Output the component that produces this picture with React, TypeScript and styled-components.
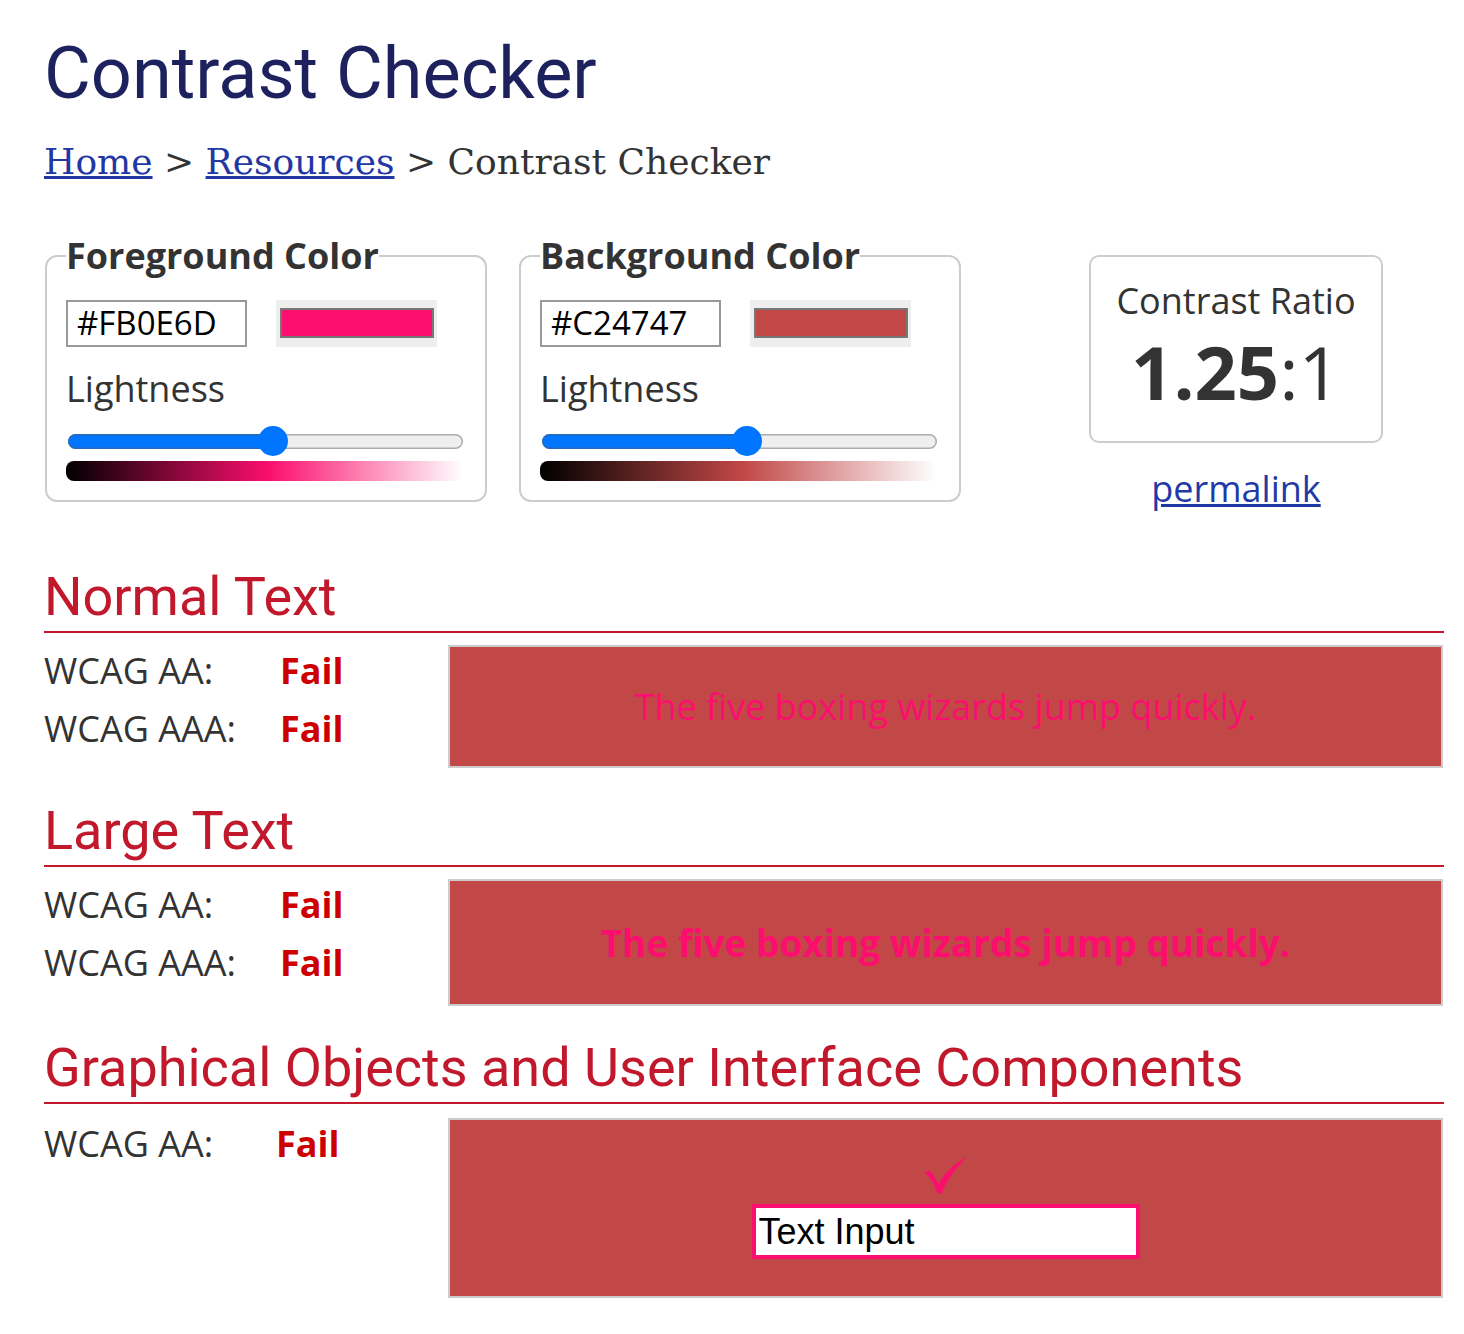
import React from "react";
import styled, { createGlobalStyle } from "styled-components";

const GlobalStyle = createGlobalStyle`
  html, body { margin: 0; padding: 0; background: #fff; }
  body {
    font-family: "Open Sans", "Liberation Sans", sans-serif;
    color: #333;
  }
  *, *::before, *::after { box-sizing: border-box; }
`;

const Page = styled.main`
  width: 1464px;
  padding: 0 20px 37px 44px;
`;

const Title = styled.h1`
  margin: 32px 0 0;
  font-family: Roboto, "Liberation Sans", sans-serif;
  font-weight: 400;
  font-size: 72px;
  line-height: 84px;
  color: #1d225f;
`;

const Breadcrumb = styled.nav`
  margin-top: 25px;
  font-family: "DejaVu Serif", "Liberation Serif", serif;
  font-size: 36px;
  line-height: 42px;
  color: #333;
  white-space: pre;
`;

const CrumbLink = styled.a`
  color: #2237a3;
  text-decoration: underline;
`;

const ControlsRow = styled.div`
  margin-top: 55px;
  padding-left: 1px;
  display: flex;
  align-items: flex-start;
`;

const ColorFieldset = styled.fieldset<{ $gapLeft?: number }>`
  width: 442px;
  margin: 0 0 0 ${(p) => p.$gapLeft ?? 0}px;
  padding: 26px 22px 19px 19px;
  border: 2px solid #ccc;
  border-radius: 12px;
  min-width: 0;
`;

const Legend = styled.legend`
  padding: 0;
  font-weight: 700;
  font-size: 36px;
  line-height: 36px;
  color: #333;
`;

const InputRow = styled.div`
  display: flex;
  gap: 29px;
  height: 47px;
`;

const HexInput = styled.input`
  width: 181px;
  height: 47px;
  margin: 0;
  border: 2px solid #999;
  border-radius: 0;
  padding: 0 0 3px 9px;
  font-family: "Open Sans", sans-serif;
  font-size: 33px;
  color: #000;
  background: #fff;
  outline: none;
`;

const Swatch = styled.div`
  width: 161px;
  padding: 8px 3px 9px 4px;
  background: #eee;
  display: flex;
`;

const SwatchColor = styled.div<{ $color: string }>`
  flex: 1;
  border: 2px solid #777;
  background: ${(p) => p.$color};
`;

const SliderLabel = styled.label`
  display: block;
  margin-top: 17px;
  font-size: 36px;
  line-height: 49px;
  color: #333;
`;

const Range = styled.input<{ $fill: number }>`
  -webkit-appearance: none;
  appearance: none;
  display: block;
  width: 395px;
  height: 30px;
  margin: 13px 0 0 2px;
  padding: 0;
  background: transparent;

  &::-webkit-slider-runnable-track {
    height: 15px;
    border-radius: 8px;
    background: linear-gradient(
      to right,
      #0075ff 0%,
      #0075ff ${(p) => p.$fill}%,
      #efefef ${(p) => p.$fill}%,
      #efefef 100%
    );
    box-shadow: inset 0 0 0 1.5px rgba(90, 90, 90, 0.45);
  }

  &::-webkit-slider-thumb {
    -webkit-appearance: none;
    appearance: none;
    width: 30px;
    height: 30px;
    margin-top: -7.5px;
    border: none;
    border-radius: 50%;
    background: #0075ff;
  }
`;

const Scale = styled.div<{ $color: string }>`
  margin-top: 5px;
  width: 397px;
  height: 20px;
  border-radius: 8px;
  background: linear-gradient(to right, #000 0%, ${(p) => p.$color} 51%, #fff 100%);
`;

const RatioColumn = styled.div`
  margin: 17px 0 0 128px;
  width: 294px;
  display: flex;
  flex-direction: column;
  align-items: center;
`;

const RatioBox = styled.div`
  width: 294px;
  height: 188px;
  border: 2px solid #ccc;
  border-radius: 10px;
  padding-top: 19px;
  text-align: center;
`;

const RatioLabel = styled.div`
  font-size: 36px;
  line-height: 49px;
  color: #333;
`;

const RatioValue = styled.div`
  margin-top: 10px;
  font-size: 74px;
  line-height: 74px;
  color: #333;
`;

const RatioStrong = styled.strong`
  font-weight: 700;
`;

const Permalink = styled.a`
  margin-top: 21px;
  font-size: 36px;
  line-height: 49px;
  color: #1f3aa6;
  text-decoration: underline;
`;

const Section = styled.section<{ $top: number }>`
  margin-top: ${(p) => p.$top}px;
`;

const SectionHeading = styled.h2`
  margin: 0;
  padding-bottom: 3px;
  border-bottom: 2px solid #c1182b;
  font-family: Roboto, "Liberation Sans", sans-serif;
  font-weight: 400;
  font-size: 54px;
  line-height: 63px;
  color: #c1182b;
`;

const SectionBody = styled.div<{ $top: number }>`
  margin-top: ${(p) => p.$top}px;
  display: grid;
  grid-template-columns: 404px 995px;
  align-items: start;
`;

const Results = styled.div<{ $labelWidth: number }>`
  display: grid;
  grid-template-columns: ${(p) => p.$labelWidth}px auto;
  font-size: 36px;
  line-height: 58px;
`;

const Level = styled.span`
  color: #333;
`;

const Verdict = styled.span`
  font-weight: 700;
  color: #cc0000;
`;

const Sample = styled.div<{ $height: number; $bold?: boolean; $bg: string; $fg: string }>`
  margin-top: 3px;
  height: ${(p) => p.$height}px;
  border: 2px solid #ccc;
  background: ${(p) => p.$bg};
  color: ${(p) => p.$fg};
  display: flex;
  flex-direction: column;
  align-items: center;
  justify-content: center;
  gap: 10px;
  font-size: ${(p) => (p.$bold ? 37 : 36)}px;
  font-weight: ${(p) => (p.$bold ? 700 : 400)};
`;

const CheckMark = styled.svg`
  display: block;
  width: 44px;
  height: 37px;
`;

const DemoInput = styled.input<{ $accent: string }>`
  display: block;
  width: 388px;
  height: 55px;
  margin: 0;
  padding: 0 3px;
  border: 4px solid ${(p) => p.$accent};
  border-radius: 0;
  background: #fff;
  font-family: "Liberation Sans", Arial, sans-serif;
  font-size: 36px;
  color: #000;
  outline: none;
`;

const FG = "#FB0E6D";
const BG = "#C24747";
const LIGHTNESS = 52;

// fill of the track ends at the thumb centre
const fillPct = (v: number) => ((15 + (v / 100) * 365) / 395) * 100;

type ColorControlProps = { legend: string; color: string; gapLeft?: number };

function ColorControl({ legend, color, gapLeft }: ColorControlProps) {
  return (
    <ColorFieldset $gapLeft={gapLeft}>
      <Legend>{legend}</Legend>
      <InputRow>
        <HexInput defaultValue={color} aria-label={`${legend} hex`} />
        <Swatch>
          <SwatchColor $color={color} />
        </Swatch>
      </InputRow>
      <SliderLabel>Lightness</SliderLabel>
      <Range
        type="range"
        min={0}
        max={100}
        defaultValue={LIGHTNESS}
        $fill={fillPct(LIGHTNESS)}
        aria-label={`${legend} lightness`}
      />
      <Scale $color={color} />
    </ColorFieldset>
  );
}

type Row = { level: string; result: string };

function ResultList({ rows, labelWidth }: { rows: Row[]; labelWidth: number }) {
  return (
    <Results $labelWidth={labelWidth}>
      {rows.map((r) => (
        <React.Fragment key={r.level}>
          <Level>{r.level}</Level>
          <Verdict>{r.result}</Verdict>
        </React.Fragment>
      ))}
    </Results>
  );
}

const both: Row[] = [
  { level: "WCAG AA:", result: "Fail" },
  { level: "WCAG AAA:", result: "Fail" },
];

export default function App() {
  return (
    <>
      <GlobalStyle />
      <Page>
        <Title>Contrast Checker</Title>
        <Breadcrumb>
          <CrumbLink href="#">Home</CrumbLink>
          {" > "}
          <CrumbLink href="#">Resources</CrumbLink>
          {" > Contrast Checker"}
        </Breadcrumb>

        <ControlsRow>
          <ColorControl legend="Foreground Color" color={FG} />
          <ColorControl legend="Background Color" color={BG} gapLeft={32} />
          <RatioColumn>
            <RatioBox>
              <RatioLabel>Contrast Ratio</RatioLabel>
              <RatioValue>
                <RatioStrong>1.25</RatioStrong>:1
              </RatioValue>
            </RatioBox>
            <Permalink href="#">permalink</Permalink>
          </RatioColumn>
        </ControlsRow>

        <Section $top={52}>
          <SectionHeading>Normal Text</SectionHeading>
          <SectionBody $top={9}>
            <ResultList rows={both} labelWidth={236} />
            <Sample $height={123} $bg={BG} $fg={FG}>
              The five boxing wizards jump quickly.
            </Sample>
          </SectionBody>
        </Section>

        <Section $top={31}>
          <SectionHeading>Large Text</SectionHeading>
          <SectionBody $top={9}>
            <ResultList rows={both} labelWidth={236} />
            <Sample $height={127} $bold $bg={BG} $fg={FG}>
              The five boxing wizards jump quickly.
            </Sample>
          </SectionBody>
        </Section>

        <Section $top={30}>
          <SectionHeading>Graphical Objects and User Interface Components</SectionHeading>
          <SectionBody $top={11}>
            <ResultList rows={[{ level: "WCAG AA:", result: "Fail" }]} labelWidth={232} />
            <Sample $height={180} $bg={BG} $fg={FG}>
              <CheckMark viewBox="0 0 44 37" aria-hidden="true">
                <path
                  fill={FG}
                  d="M1 15.5 C3.5 13 6.5 13.5 8.5 16.5 L14.5 27 C20 17 29 7 43 0 C33 10 23.5 21 17.5 36.5 L13.5 36.5 C10.5 27.5 6.5 20.5 1 15.5 Z"
                />
              </CheckMark>
              <DemoInput $accent={FG} defaultValue="Text Input" aria-label="Text Input" />
            </Sample>
          </SectionBody>
        </Section>
      </Page>
    </>
  );
}
